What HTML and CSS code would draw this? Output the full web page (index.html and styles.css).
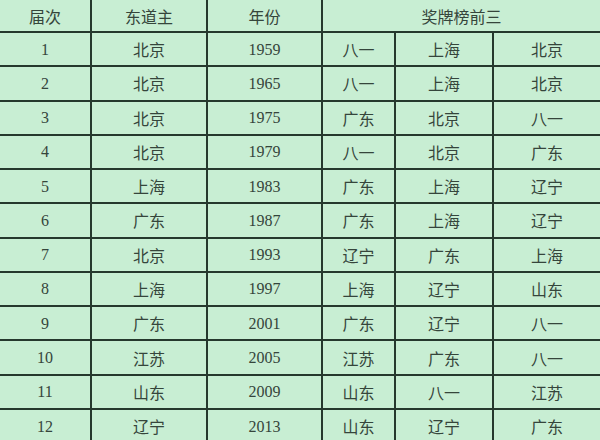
FILE: index.html
```html
<!DOCTYPE html>
<html lang="zh">
<head>
<meta charset="utf-8">
<link rel="stylesheet" href="styles.css">
</head>
<body>
<div class="grid">
  <div class="c h">届次</div><div class="c h">东道主</div><div class="c h">年份</div><div class="c h span3">奖牌榜前三</div>
  <div class="c n">1</div><div class="c">北京</div><div class="c n">1959</div><div class="c">八一</div><div class="c">上海</div><div class="c">北京</div>
  <div class="c n">2</div><div class="c">北京</div><div class="c n">1965</div><div class="c">八一</div><div class="c">上海</div><div class="c">北京</div>
  <div class="c n">3</div><div class="c">北京</div><div class="c n">1975</div><div class="c">广东</div><div class="c">北京</div><div class="c">八一</div>
  <div class="c n">4</div><div class="c">北京</div><div class="c n">1979</div><div class="c">八一</div><div class="c">北京</div><div class="c">广东</div>
  <div class="c n">5</div><div class="c">上海</div><div class="c n">1983</div><div class="c">广东</div><div class="c">上海</div><div class="c">辽宁</div>
  <div class="c n">6</div><div class="c">广东</div><div class="c n">1987</div><div class="c">广东</div><div class="c">上海</div><div class="c">辽宁</div>
  <div class="c n">7</div><div class="c">北京</div><div class="c n">1993</div><div class="c">辽宁</div><div class="c">广东</div><div class="c">上海</div>
  <div class="c n">8</div><div class="c">上海</div><div class="c n">1997</div><div class="c">上海</div><div class="c">辽宁</div><div class="c">山东</div>
  <div class="c n">9</div><div class="c">广东</div><div class="c n">2001</div><div class="c">广东</div><div class="c">辽宁</div><div class="c">八一</div>
  <div class="c n">10</div><div class="c">江苏</div><div class="c n">2005</div><div class="c">江苏</div><div class="c">广东</div><div class="c">八一</div>
  <div class="c n">11</div><div class="c">山东</div><div class="c n">2009</div><div class="c">山东</div><div class="c">八一</div><div class="c">江苏</div>
  <div class="c n">12</div><div class="c">辽宁</div><div class="c n">2013</div><div class="c">山东</div><div class="c">辽宁</div><div class="c">广东</div>
</div>
</body>
</html>
```
FILE: styles.css
```css
html, body {
  margin: 0;
  padding: 0;
  background: #c8eed3;
  overflow: hidden;
}
.grid {
  display: grid;
  width: 600px;
  grid-template-columns: 90px 114px 113px 71px 96px 106px;
  grid-template-rows: 31px;
  grid-auto-rows: 32.27px;
  gap: 2px;
  background: #25382d;
  font-family: "Noto Sans CJK SC", sans-serif;
  font-size: 16px;
  color: #35453b;
}
.c {
  background: #c8eed3;
  display: flex;
  align-items: center;
  justify-content: center;
  line-height: 1;
}
.n {
  font-family: "Liberation Serif", "Noto Sans CJK SC", serif;
  font-size: 16px;
  padding-top: 1px;
}
.span3 {
  grid-column: span 3;
}
```
